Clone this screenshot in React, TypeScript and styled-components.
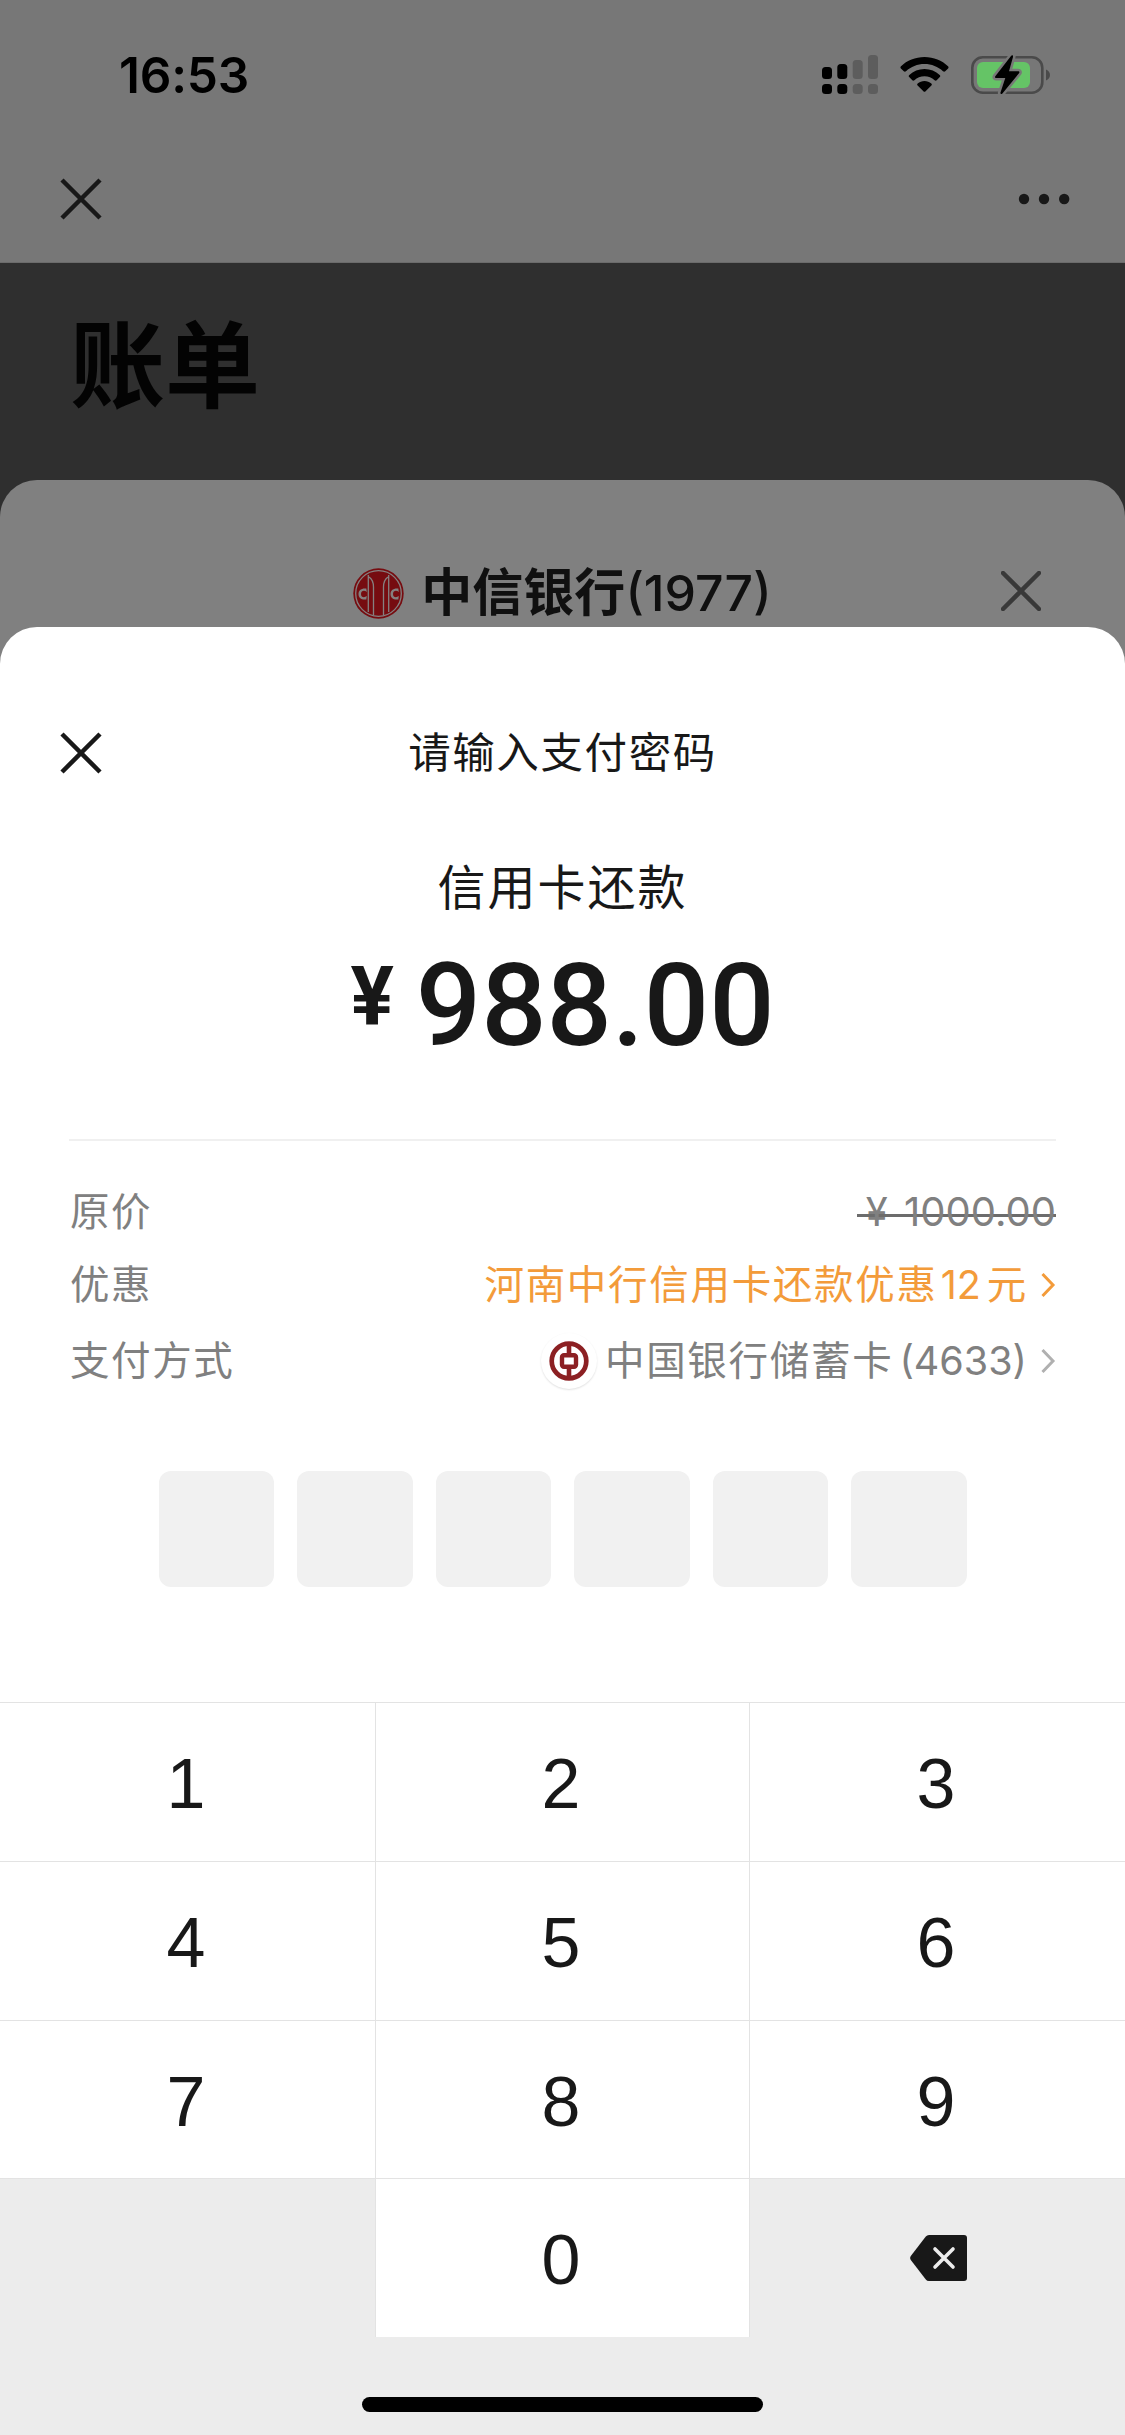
import React from "react";
import styled, { createGlobalStyle } from "styled-components";

const latin = `Inter, "Noto Sans CJK SC", sans-serif`;

const GlobalStyle = createGlobalStyle`
  *, *::before, *::after { box-sizing: border-box; }
  body { margin: 0; background: #ececec; }
`;

const Screen = styled.main`
  width: 1125px;
  height: 2435px;
  display: flex;
  flex-direction: column;
  overflow: hidden;
  background: #ececec;
  color: #181818;
  font-family: ${latin};
`;

const StatusBar = styled.header`
  height: 136px;
  flex: none;
  display: flex;
  align-items: flex-start;
  justify-content: space-between;
  padding: 45px 74px 0 119px;
  background: #777;
  color: #000;
`;

const Clock = styled.time`
  font-size: 49.5px;
  line-height: 60px;
  font-weight: 600;
  letter-spacing: -0.2px;
`;

const StatusIcons = styled.div`
  height: 60px;
  display: flex;
  align-items: center;
`;

const NavBar = styled.nav`
  height: 127px;
  flex: none;
  display: flex;
  align-items: center;
  justify-content: space-between;
  padding: 0 55px 0 60px;
  background: #777;
  border-bottom: 1px solid #6b6b6b;
`;

const IconButton = styled.button`
  display: flex;
  padding: 0;
  border: 0;
  background: none;
  color: inherit;
`;

const BillHeader = styled.section`
  height: 217px;
  flex: none;
  padding: 27px 0 0 70px;
  background: #2f2f2f;
`;

const BillTitle = styled.h1`
  margin: 0;
  font: 700 95px/140px "Noto Sans CJK SC", sans-serif;
  color: #030303;
`;

const CardBackdrop = styled.div`
  height: 147px;
  flex: none;
  background: #2f2f2f;
`;

const BillCard = styled.section`
  height: 147px;
  display: grid;
  grid-template-columns: 1fr auto 1fr;
  align-items: center;
  padding: 74px 84px 0;
  border-radius: 37px 37px 0 0;
  background: #808080;
`;

const BankTitle = styled.div`
  grid-column: 2;
  display: flex;
  align-items: center;
  gap: 17px;
  height: 70px;
  padding-top: 5px;
  color: #101010;
`;

const BankName = styled.h2`
  margin: 0;
  font-size: 51px;
  line-height: 60px;
  font-weight: 700;
  white-space: nowrap;
`;

const CardTail = styled.span`
  font-size: 50px;
  font-weight: 500;
`;

const CardClose = styled(IconButton)`
  justify-self: end;
  color: #393939;
`;

const SheetBackdrop = styled.div`
  flex: none;
  background: #808080;
`;

const Sheet = styled.section`
  height: 1075px;
  display: flex;
  flex-direction: column;
  border-radius: 37px 37px 0 0;
  background: #fff;
`;

const SheetHeader = styled.div`
  height: 100px;
  margin-top: 76px;
  display: grid;
  grid-template-columns: 1fr auto 1fr;
  align-items: center;
  padding: 0 60px;
`;

const SheetTitle = styled.h2`
  margin: 0;
  font-size: 42.5px;
  line-height: 60px;
  font-weight: 400;
  letter-spacing: 1.6px;
`;

const Summary = styled.div`
  height: 338px;
  margin: 0 69px;
  display: flex;
  flex-direction: column;
  align-items: center;
  padding-top: 50px;
  border-bottom: 2px solid #f0f0f0;
`;

const Purpose = styled.p`
  margin: 0;
  font-size: 48px;
  line-height: 70px;
  letter-spacing: 2px;
`;

const Amount = styled.div`
  display: flex;
  align-items: flex-start;
  margin-top: 14px;
  font-family: Roboto, sans-serif;
`;

const Currency = styled.span`
  font-size: 81px;
  line-height: 96px;
  font-weight: 700;
  margin: 12px 22px 0 0;
`;

const Figure = styled.span`
  font-size: 115px;
  line-height: 138px;
  font-weight: 500;
`;

const Details = styled.dl`
  margin: 34px 69px 0 70px;
  display: flex;
  flex-direction: column;
`;

const DetailRow = styled.div<{ $height: number }>`
  height: ${(p) => p.$height}px;
  display: flex;
  align-items: center;
  justify-content: space-between;
  color: #808080;
`;

const Label = styled.dt`
  font-size: 39.5px;
  line-height: 56px;
  letter-spacing: 1.6px;
`;

const Value = styled.dd<{ $accent?: boolean }>`
  margin: 0;
  display: flex;
  align-items: center;
  font-size: 39.5px;
  line-height: 56px;
  letter-spacing: 1.7px;
  white-space: nowrap;
  color: ${(p) => (p.$accent ? "#f39b3a" : "#808080")};
`;

const OldPrice = styled.s`
  padding-left: 9px;
  font-size: 40px;
  letter-spacing: 0;
  word-spacing: 5px;
  text-decoration: none;
  background: linear-gradient(#6c6c6c, #6c6c6c) 0 30px / 100% 3px no-repeat;
`;

const Digits = styled.span<{ $before: number; $after: number; $spacing?: number }>`
  margin: 0 ${(p) => p.$after}px 0 ${(p) => p.$before}px;
  letter-spacing: ${(p) => p.$spacing ?? 0}px;
`;

const BankBadge = styled.span`
  width: 56px;
  height: 56px;
  margin-right: 8px;
  display: flex;
  align-items: center;
  justify-content: center;
  border-radius: 50%;
  background: #fff;
  box-shadow: 0 1px 2px rgba(0, 0, 0, 0.12);
`;

const Chevron = styled.svg<{ $color: string }>`
  width: 16px;
  height: 26px;
  margin-left: 12px;
  fill: none;
  stroke: ${(p) => p.$color};
  stroke-width: 3;
`;

const Passcode = styled.div`
  display: flex;
  justify-content: center;
  gap: 23px;
  margin-top: 70px;
`;

const PasscodeCell = styled.span`
  width: 115.5px;
  height: 115.5px;
  border-radius: 12px;
  background: #f1f1f1;
`;

const Keypad = styled.div`
  height: 635px;
  flex: none;
  display: grid;
  grid-template-columns: 375px 373px 375px;
  grid-template-rows: 158px 158px 157px 158px;
  gap: 1px;
  padding-top: 1px;
  background: #e3e3e3;
`;

const Key = styled.button<{ $muted?: boolean }>`
  padding: 4px 3px 0 0;
  border: 0;
  display: flex;
  align-items: center;
  justify-content: center;
  background: ${(p) => (p.$muted ? "#ececec" : "#fff")};
  color: #181818;
  font: 400 70px/80px "Liberation Sans", Arial, sans-serif;
`;

const HomeArea = styled.footer`
  height: 98px;
  flex: none;
  display: flex;
  justify-content: center;
  padding-top: 60px;
  background: #ececec;
`;

const HomeIndicator = styled.div`
  width: 401px;
  height: 15px;
  border-radius: 8px;
  background: #000;
`;

const Cross = ({ size, stroke, round }: { size: number; stroke: number; round?: boolean }) => (
  <svg width={size} height={size} viewBox={`0 0 ${size} ${size}`} fill="none" stroke="currentColor" strokeWidth={stroke} strokeLinecap={round ? "round" : "butt"}>
    <path d={`M2 2L${size - 2} ${size - 2}M${size - 2} 2L2 ${size - 2}`} />
  </svg>
);

const Signal = () => (
  <svg width="56" height="40" viewBox="0 0 56 40">
    <rect x="0" y="12" width="10" height="12" rx="3.5" />
    <rect x="15.3" y="9" width="10" height="15" rx="3.5" />
    <rect x="0" y="29" width="10" height="10" rx="3.5" />
    <rect x="15.3" y="29" width="10" height="10" rx="3.5" />
    <g fill="#5d5d5d">
      <rect x="30.7" y="5" width="10" height="19" rx="3.5" />
      <rect x="46" y="0" width="10" height="24" rx="3.5" />
      <rect x="30.7" y="29" width="10" height="10" rx="3.5" />
      <rect x="46" y="29" width="10" height="10" rx="3.5" />
    </g>
  </svg>
);

const WifiIcon = styled.svg`
  margin: 0 22px 2px;
`;

const Wifi = () => (
  <WifiIcon width="49" height="37" viewBox="0 0 49 37">
    <path d="M24.5 1C33.7 1 42 4.5 48 10.2C48.7 10.9 48.7 11.7 48.1 12.4L45.2 15.3C44.6 15.9 43.7 15.9 43 15.3C38 10.7 31.6 8.1 24.5 8.1S11 10.7 6 15.3C5.3 15.9 4.4 15.9 3.8 15.3L.9 12.4C.3 11.7 .3 10.9 1 10.2C7 4.5 15.3 1 24.5 1Z" />
    <path d="M24.5 13C30.4 13 35.7 15.2 39.7 18.9C40.4 19.6 40.4 20.4 39.8 21.1L36.7 24.2C36.1 24.8 35.3 24.8 34.6 24.2C31.9 21.8 28.4 20.3 24.5 20.3S17.1 21.8 14.4 24.2C13.7 24.8 12.9 24.8 12.3 24.2L9.2 21.1C8.6 20.4 8.6 19.6 9.3 18.9C13.3 15.2 18.6 13 24.5 13Z" />
    <path d="M24.5 25C27.1 25 29.5 25.9 31.3 27.4C32 28 32 28.9 31.4 29.5L25.6 35.3C24.9 36 24.1 36 23.4 35.3L17.6 29.5C17 28.9 17 28 17.7 27.4C19.5 25.9 21.9 25 24.5 25Z" />
  </WifiIcon>
);

const BatteryIcon = styled.svg`
  margin-bottom: 1px;
`;

const Battery = () => (
  <BatteryIcon width="80" height="42" viewBox="0 0 80 42">
    <rect x="1.3" y="3.3" width="70" height="35.4" rx="10.5" fill="none" stroke="#4a4a4a" strokeWidth="2.6" />
    <path d="M75 15.5C77.500 16.500 79 18.500 79 21S77.500 25.500 75 26.500Z" fill="#4a4a4a" />
    <rect x="6" y="8" width="53" height="26" rx="6" fill="#65c466" />
    <path d="M40 2L24.300 22.300C23.600 23.300 24 24 25 24H34.300L29.500 38.400C29 40 30.500 40.500 31.400 39.400L48 19.200C48.800 18.100 48.300 17.300 47.200 17.300H38L42 3C42.400 1.200 41.100 .500 40 2Z" fill="#000" stroke="#777" strokeWidth="5" paintOrder="stroke" />
  </BatteryIcon>
);

const MoreDots = () => (
  <svg width="52" height="12" viewBox="0 0 52 12" fill="#181818">
    <circle cx="6" cy="6" r="5.2" />
    <circle cx="26" cy="6" r="5.2" />
    <circle cx="46.2" cy="6" r="5.2" />
  </svg>
);

const CiticLogo = () => (
  <svg width="51" height="51" viewBox="0 0 51 51">
    <circle cx="25.5" cy="25.5" r="25.2" fill="#760c10" />
    <g fill="none" stroke="#858080" strokeWidth="1.3">
      <circle cx="25.5" cy="25.5" r="22.8" />
      <path d="M15.3 7V44M16 9Q20.500 12 20.500 19V47M35 9Q30.500 12 30.500 19V47M35.700 7V44" />
    </g>
    <g fill="#858080">
      <path d="M13.800 24C11.500 22 8 22.500 8 26S11.500 30 13.800 28L13.300 31.500C8 32 5.500 29.500 5.500 26S8 20 13.300 20.500Z" />
      <path d="M13.800 24C11.500 22 8 22.500 8 26S11.500 30 13.800 28L13.300 31.500C8 32 5.500 29.500 5.500 26S8 20 13.300 20.500Z" transform="translate(32)" />
    </g>
  </svg>
);

const BocLogo = () => (
  <svg width="40" height="40" viewBox="0 0 40 40" fill="none" stroke="#8c2023">
    <circle cx="20" cy="20" r="17.3" strokeWidth="4.7" />
    <rect x="13" y="14.3" width="14" height="11.400" rx="2" strokeWidth="4.4" />
    <path d="M20 2V13M20 27V38" strokeWidth="4.600" />
  </svg>
);

const Backspace = () => (
  <svg width="57" height="46" viewBox="0 0 57 46">
    <path d="M19 0H54Q57 0 57 3V43Q57 46 54 46H19Q17 46 15.800 44.500L.800 25Q-.500 23 .800 21L15.800 1.500Q17 0 19 0Z" fill="#181818" />
    <path d="M25 14L43 32M43 14L25 32" stroke="#ececec" strokeWidth="3.6" strokeLinecap="round" />
  </svg>
);

const Arrow = ({ color }: { color: string }) => (
  <Chevron $color={color} viewBox="0 0 16 26">
    <path d="M2.5 2L13 13L2.5 24" />
  </Chevron>
);

const DeleteIcon = styled.span`
  display: flex;
  padding: 0 0 4px 5px;
`;

export default function App() {
  return (
    <Screen>
      <GlobalStyle />
      <StatusBar>
        <Clock>16:53</Clock>
        <StatusIcons>
          <Signal />
          <Wifi />
          <Battery />
        </StatusIcons>
      </StatusBar>
      <NavBar>
        <IconButton aria-label="关闭"><Cross size={42} stroke={4.5} /></IconButton>
        <IconButton aria-label="更多"><MoreDots /></IconButton>
      </NavBar>
      <BillHeader>
        <BillTitle>账单</BillTitle>
      </BillHeader>
      <CardBackdrop>
        <BillCard>
          <BankTitle>
            <CiticLogo />
            <BankName>中信银行<CardTail>(1977)</CardTail></BankName>
          </BankTitle>
          <CardClose aria-label="关闭"><Cross size={40} stroke={4.5} round /></CardClose>
        </BillCard>
      </CardBackdrop>
      <SheetBackdrop>
        <Sheet>
          <SheetHeader>
            <IconButton aria-label="关闭"><Cross size={42} stroke={4.5} /></IconButton>
            <SheetTitle>请输入支付密码</SheetTitle>
          </SheetHeader>
          <Summary>
            <Purpose>信用卡还款</Purpose>
            <Amount>
              <Currency>¥</Currency>
              <Figure>988.00</Figure>
            </Amount>
          </Summary>
          <Details>
            <DetailRow $height={74}>
              <Label>原价</Label>
              <Value><OldPrice>¥ 1000.00</OldPrice></Value>
            </DetailRow>
            <DetailRow $height={72}>
              <Label>优惠</Label>
              <Value $accent>
                河南中行信用卡还款优惠<Digits $before={3} $after={6}>12</Digits>元
                <Arrow color="#f39b3a" />
              </Value>
            </DetailRow>
            <DetailRow $height={80}>
              <Label>支付方式</Label>
              <Value>
                <BankBadge><BocLogo /></BankBadge>
                中国银行储蓄卡<Digits $before={6} $after={1}>(4633)</Digits>
                <Arrow color="#b0b0b0" />
              </Value>
            </DetailRow>
          </Details>
          <Passcode>
            {[0, 1, 2, 3, 4, 5].map((i) => <PasscodeCell key={i} />)}
          </Passcode>
        </Sheet>
      </SheetBackdrop>
      <Keypad>
        {["1", "2", "3", "4", "5", "6", "7", "8", "9"].map((n) => <Key key={n}>{n}</Key>)}
        <Key $muted aria-hidden />
        <Key>0</Key>
        <Key $muted aria-label="删除"><DeleteIcon><Backspace /></DeleteIcon></Key>
      </Keypad>
      <HomeArea><HomeIndicator /></HomeArea>
    </Screen>
  );
}
